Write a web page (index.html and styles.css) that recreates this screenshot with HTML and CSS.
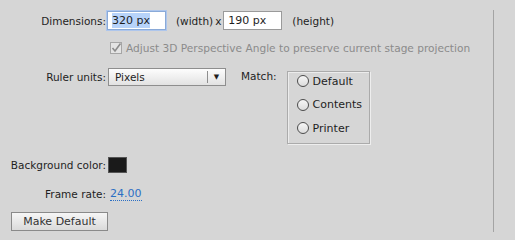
FILE: index.html
```html
<!DOCTYPE html>
<html lang="en">
<head>
    <meta charset="UTF-8">
    <title>Document Settings</title>
    <link rel="stylesheet" href="styles.css">
</head>
<body>

<div class="panel">
    <!-- Dimensions -->
    <div class="row dims">
        <span class="label">Dimensions:</span>
        <span class="field focused"><span class="sel">320 px</span></span>
        <span class="hint">(width)</span>
        <span class="times">x</span>
        <span class="field">190 px</span>
        <span class="hint">(height)</span>
    </div>

    <div class="row check-row">
        <span class="check">
            <svg width="12" height="12" viewBox="0 0 12 12">
                <rect x="0.5" y="0.5" width="11" height="11" fill="#e4e4e4" stroke="#a6a6a6"/>
                <path d="M2.5 6 L5 9 L10.5 1.5" fill="none" stroke="#8c8c8c" stroke-width="1.6"/>
            </svg>
        </span>
        <span class="disabled">Adjust 3D Perspective Angle to preserve current stage projection</span>
    </div>

    <!-- Ruler units + Match -->
    <div class="row ruler-row">
        <span class="label">Ruler units:</span>
        <div class="select">
            <span class="select-text">Pixels</span>
            <span class="select-arrow">&#9660;</span>
        </div>
        <span class="match-label">Match:</span>
        <div class="match-box">
            <label class="radio"><span class="dot"></span>Default</label>
            <label class="radio"><span class="dot"></span>Contents</label>
            <label class="radio"><span class="dot"></span>Printer</label>
        </div>
    </div>

    <div class="row bg-row">
        <span class="label">Background color:</span>
        <span class="swatch"></span>
    </div>

    <div class="row rate-row">
        <span class="label">Frame rate:</span>
        <span class="rate">24.00</span>
    </div>

    <button class="button">Make Default</button>
</div>

</body>
</html>
```

FILE: styles.css
```css
body {
    margin: 0;
    background-color: #d6d6d6;
    font-family: "DejaVu Sans", Arial, sans-serif;
    font-size: 10.5px;
    color: #1e1e1e;
}
.panel {
    width: 483px;
    height: 221px;
    margin-top: 10px;
    padding-left: 10px;
    padding-top: 1px;
    border-right: 1px solid #a4a4a4;
}
.row {
    display: flex;
    align-items: center;
}
.label {
    width: 96px;
    text-align: right;
    flex-shrink: 0;
}
.field {
    box-sizing: border-box;
    width: 59px;
    height: 19px;
    line-height: 17px;
    margin-left: 1px;
    padding-left: 4px;
    background-color: #fff;
    border: 1px solid #9a9a9a;
    font-size: 11px;
}
.field.focused {
    border-color: #8aaad8;
    box-shadow: 0 0 0 1px #aec6ec;
}
.sel {
    background-color: #b7d3fa;
    padding: 1px 0;
}
.dims .hint {
    margin-left: 10px;
}
.times {
    margin-left: 2px;
    margin-right: 2px;
}
.dims .field:nth-child(5) {
    margin-left: 0;
}
.check-row {
    margin-top: 12px;
    padding-left: 100px;
}
.check {
    display: inline-flex;
    margin-right: 4px;
}
.disabled {
    color: #8b8b8b;
    font-size: 10.6px;
}
.ruler-row {
    margin-top: 14px;
    align-items: flex-start;
}
.ruler-row .label {
    margin-top: 3px;
}
.select {
    box-sizing: border-box;
    display: flex;
    align-items: center;
    width: 118px;
    height: 18px;
    margin-left: 2px;
    border: 1px solid #8e8e8e;
    background: linear-gradient(#fdfdfd, #e2e2e2);
}
.select-text {
    flex: 1;
    padding-left: 6px;
}
.select-arrow {
    width: 17px;
    height: 12px;
    line-height: 12px;
    border-left: 1px solid #8e8e8e;
    text-align: center;
    font-size: 7px;
}
.match-label {
    margin-left: 15px;
    margin-top: 2px;
}
.match-box {
    box-sizing: border-box;
    display: flex;
    flex-direction: column;
    gap: 9.5px;
    width: 83px;
    height: 73px;
    margin-left: 10px;
    margin-top: 3px;
    padding: 2px 0 0 9px;
    border: 1px solid #ababab;
    box-shadow: 1px 1px 0 #eeeeee, inset 1px 1px 0 #ececec;
}
.radio {
    display: flex;
    align-items: center;
    height: 14px;
    font-size: 11px;
}
.dot {
    box-sizing: border-box;
    width: 12px;
    height: 12px;
    margin-right: 4px;
    border: 1px solid #4c4c4c;
    border-radius: 50%;
    background: linear-gradient(#f6f6f6, #dcdcdc);
}
.bg-row {
    margin-top: 13px;
}
.swatch {
    box-sizing: border-box;
    width: 19px;
    height: 16px;
    margin-left: 2px;
    background-color: #1a1a1a;
    border: 1px solid #555;
}
.rate-row {
    margin-top: 14px;
}
.rate {
    margin-left: 4px;
    color: #2b6fc4;
    font-size: 11px;
    border-bottom: 1px dotted #2b6fc4;
}
.button {
    display: block;
    box-sizing: border-box;
    width: 97px;
    height: 19px;
    margin-top: 11px;
    margin-left: 1px;
    padding: 0;
    font-family: "DejaVu Sans", Arial, sans-serif;
    font-size: 11px;
    color: #333;
    border: 1px solid #8a8a8a;
    background: linear-gradient(#f6f6f6, #dadada);
}
```
